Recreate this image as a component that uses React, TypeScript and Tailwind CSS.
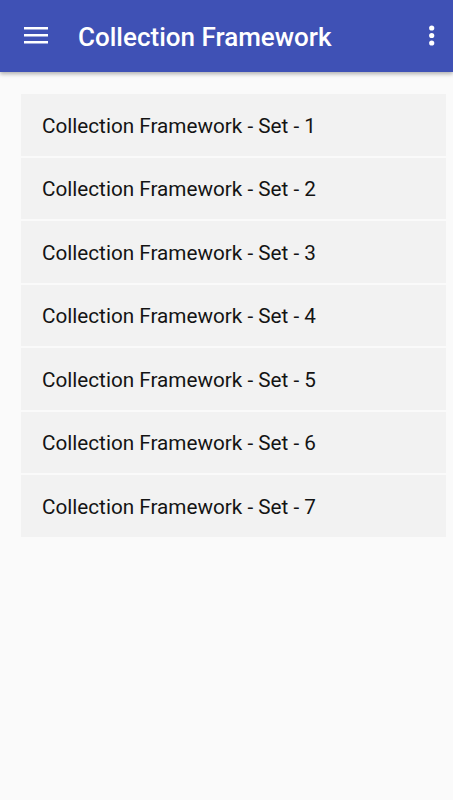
import React from "react";

export default function App() {
  const items = [1, 2, 3, 4, 5, 6, 7];
  return (
    <div className="w-[453px] h-[800px] bg-[#fafafa] flex flex-col" style={{ fontFamily: "Roboto, sans-serif" }}>
      <div className="h-[72px] bg-[#3f51b5] flex items-center shadow-[0_2px_4px_rgba(0,0,0,0.3)] relative z-10">
        <div className="pl-[24px] w-[78px] flex items-center">
          <svg width="24" height="18" viewBox="0 0 24 18" fill="white">
            <rect x="0" y="0" width="24" height="2.5" />
            <rect x="0" y="7" width="24" height="2.5" />
            <rect x="0" y="14" width="24" height="2.5" />
          </svg>
        </div>
        <div className="flex-1 text-white text-[26px] font-medium leading-none pt-[2px]">Collection Framework</div>
        <div className="w-[30px] flex items-center">
          <svg width="10" height="22" viewBox="0 0 10 22" fill="white" className="ml-[4px]">
            <circle cx="4.7" cy="3" r="2.6" />
            <circle cx="4.7" cy="10.5" r="2.6" />
            <circle cx="4.7" cy="18" r="2.6" />
          </svg>
        </div>
      </div>
      <div className="pt-[22px] pl-[21px] pr-[7px] flex flex-col gap-[2px]">
        {items.map((n) => (
          <div key={n} className="h-[61.5px] bg-[#f2f2f2] flex items-center pl-[21px] pt-[3px] text-[20.7px] text-[#141414]">
            Collection Framework - Set - {n}
          </div>
        ))}
      </div>
    </div>
  );
}
